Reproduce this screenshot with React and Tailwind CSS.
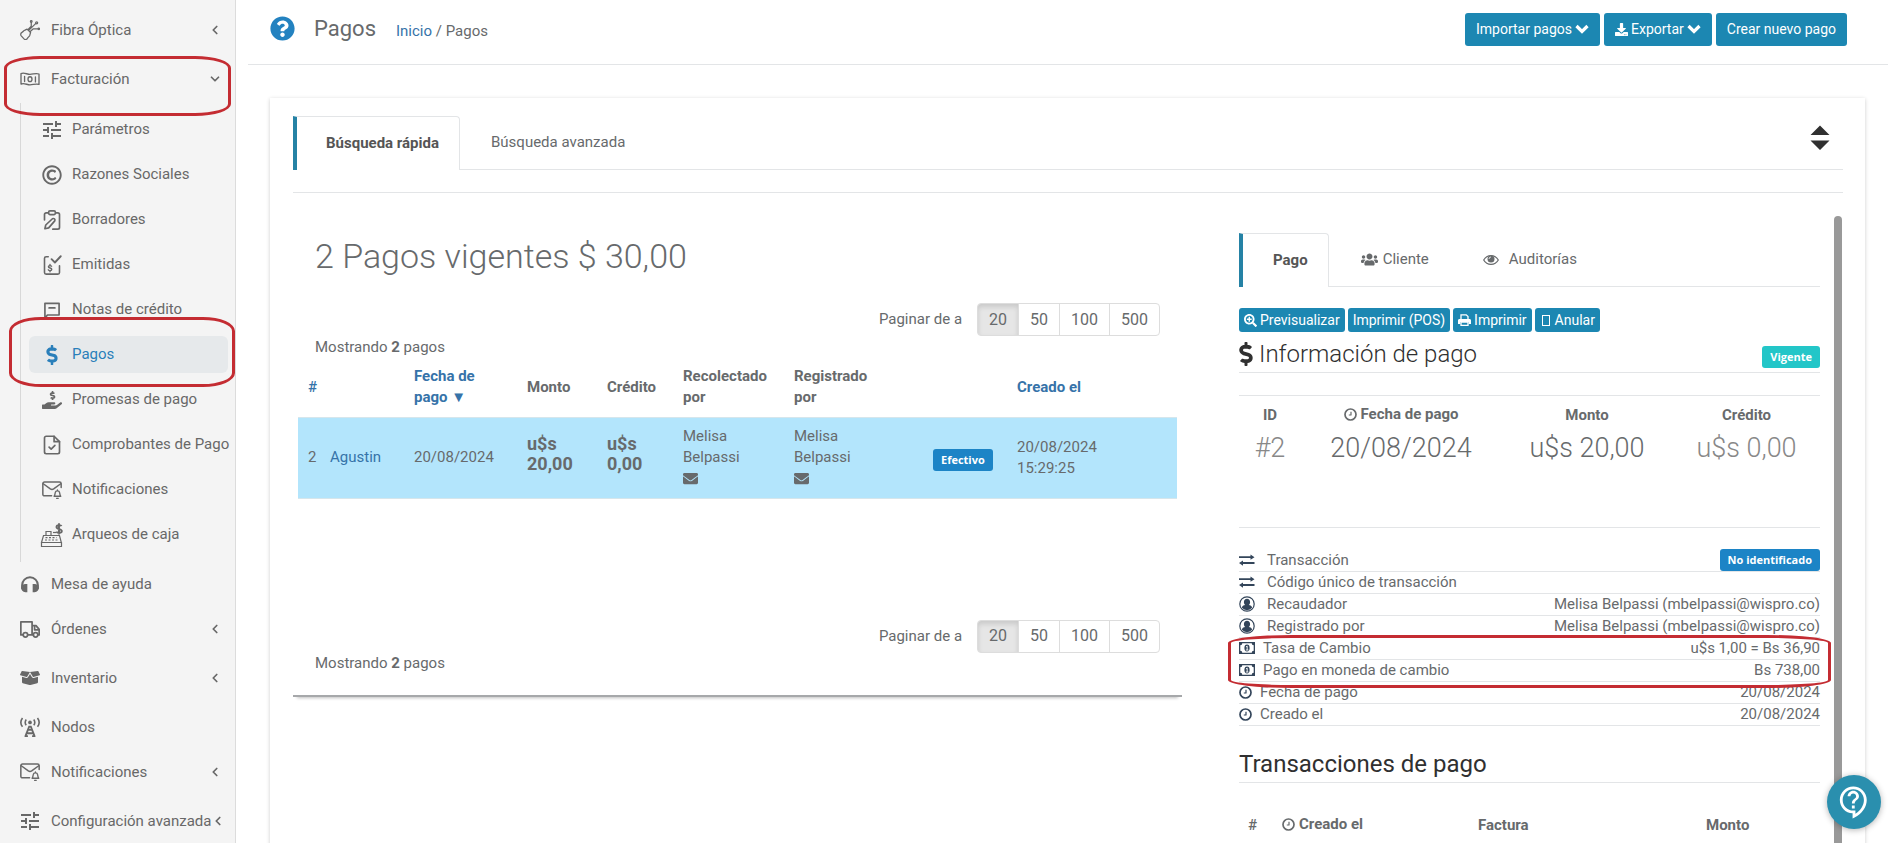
import { useState } from "react";
import {
  FaBoxOpen,
  FaDollarSign,
  FaDownload,
  FaEnvelope,
  FaHandHoldingUsd,
  FaQuestionCircle,
  FaRegCopyright,
  FaSearchPlus,
  FaUsers,
} from "react-icons/fa";
import { MdOutlineContactSupport, MdTune } from "react-icons/md";
import { ChevronDown, ChevronLeft } from "lucide-react";
import clsx from "clsx";

/* ---------- icons ---------- */

function Svg({ size = 20, box = 24, width = 2, className, children }) {
  return (
    <svg
      width={size}
      height={size}
      viewBox={`0 0 ${box} ${box}`}
      fill="none"
      stroke="currentColor"
      strokeWidth={width}
      strokeLinecap="round"
      strokeLinejoin="round"
      className={clsx("shrink-0", className)}
      aria-hidden="true"
    >
      {children}
    </svg>
  );
}

const FiberIcon = () => (
  <Svg width={1.5}>
    <path d="M8.500 11 6 12.200c-1.800.4-2 2-3.600 2.600-1.700.8-1.900 3-.9 4.200l3.300 3.700c1.200 1.200 3.300 1 4.200-.7.700-1.600 2.100-1.900 2.700-3.500l1-3.500Z" />
    <path d="M9.500 11.500 13.500 7.500V2.500M10.500 12.500l8.500-8.500M12 14l4-3.500h6.500" />
    <circle cx="13.500" cy="1.800" r="1" />
    <circle cx="20" cy="3.300" r="1.200" />
    <circle cx="22.600" cy="10.500" r="0.900" />
  </Svg>
);

const BillIcon = () => (
  <Svg width={1.6}>
    <path d="M1.200 5.500c3.600-1.600 7.200.9 10.800.9s7.200-1.800 10.800-.4v12.500c-3.600-1.400-7.200.5-10.800.5s-7.200-2.500-10.800-.9Z" />
    <ellipse cx="12" cy="12.200" rx="2.400" ry="2.900" />
    <path d="M5.500 9v6M18.500 9.500v6" />
  </Svg>
);

const DraftIcon = () => (
  <Svg width={2}>
    <path d="M7 3.500H5a2 2 0 0 0-2 2V12M17 3.500h2a2 2 0 0 1 2 2V21a2 2 0 0 1-2 2h-6" />
    <rect x="8" y="1" width="8" height="4.500" rx="1.500" />
    <path d="M3.500 22.500 4.500 18l8-7.500c1.800-1 3.800.8 2.800 2.600L8 21.500Z" />
  </Svg>
);

const IssuedIcon = () => (
  <Svg width={1.9}>
    <path d="M7.500 2H5a2 2 0 0 0-2 2v17a2 2 0 0 0 2 2h14a2 2 0 0 0 2-2v-8" />
    <path d="m11.500 5 4 4L22.500 1.500" strokeWidth="2.200" />
    <path d="M11.500 13.500c-.6-1-3.800-1.200-3.800.6 0 2 4 1.100 4 3.100 0 2-3.400 1.900-4.200.5M9.600 11.500v1.500M9.600 18.500V20" strokeWidth="1.700" />
  </Svg>
);

const NoteIcon = () => (
  <Svg width={2}>
    <path d="M3.500 22V4h17v14h-14Z" />
    <path d="M8.500 9.500h7" />
  </Svg>
);

const ReceiptIcon = () => (
  <Svg width={2}>
    <path d="M14.500 1.500H5a2 2 0 0 0-2 2v17a2 2 0 0 0 2 2h14a2 2 0 0 0 2-2V8Z" />
    <path d="M14.500 1.500V8H21" />
    <path d="m8.500 14.500 2.500 2.500 4.500-4.500" />
  </Svg>
);

const MailBellIcon = () => (
  <Svg width={1.8}>
    <path d="M11.500 19H3a2 2 0 0 1-2-2V4.500a2 2 0 0 1 2-2h18a2 2 0 0 1 2 2V9" />
    <path d="m1.500 4.500 8.500 6.200c1.200.8 2.800.8 4 0l8.500-6.200" />
    <path d="M14.500 19.500c1.300-1.200 1-3 1.400-4.500.5-2.500 4.700-2.500 5.200 0 .4 1.500.1 3.300 1.400 4.500ZM18.500 12v1M17.500 22h2" strokeWidth="1.600" />
  </Svg>
);

const RegisterIcon = () => (
  <svg width="24" height="24" viewBox="0 0 24 24" className="shrink-0" aria-hidden="true">
    <g fill="none" stroke="currentColor" strokeWidth="1.200">
      <path d="M3.500 12.500h16l1.800 7H1.500ZM1.500 19.500h20v4h-20ZM6 12.500V8.500h5v4" />
      <path d="M5.500 14.700h11M5 17h13" strokeDasharray="2 1.500" />
      <path d="M13 9.500h3" />
    </g>
    <path
      d="M21.500 3.200c-.6-1.400-5-1.600-5 .9 0 2.600 5.300 1.400 5.300 4 0 2.500-4.700 2.300-5.500.6M19 .3v11.200"
      fill="none"
      stroke="currentColor"
      strokeWidth="1.900"
    />
  </svg>
);

const HeadphonesIcon = () => (
  <Svg width={2.4}>
    <path d="M2.500 17v-3.500a9.500 9.500 0 0 1 19 0V17" />
    <path
      d="M8.800 12v9.800H6.500C3.200 21.800 1.500 19.500 1.500 16.900S3.500 12 6.500 12ZM15.200 12v9.800h2.300c3.300 0 5-2.300 5-4.900S20.500 12 17.500 12Z"
      fill="currentColor"
      stroke="none"
    />
  </Svg>
);

const TruckIcon = () => (
  <Svg width={2.1}>
    <path d="M3.800 19H1V3.500h13.500V19H9.300M14.500 8h4.700L23 12.500V19h-1.500M16 19h-1.500" />
    <path d="M17.500 9v4H23" />
    <circle cx="6.500" cy="19" r="2.700" />
    <circle cx="18.700" cy="19" r="2.700" />
  </Svg>
);

const TowerIcon = () => (
  <svg width="20" height="20" viewBox="0 0 24 24" className="shrink-0" aria-hidden="true">
    <circle cx="12" cy="6.500" r="2.200" fill="currentColor" />
    <g fill="none" stroke="currentColor" strokeWidth="1.900">
      <path d="M7.500 3a6 6 0 0 0 0 7M16.500 3a6 6 0 0 1 0 7M3 1.200c-2.500 3.300-2.500 7.300 0 10.600M21 1.200c2.500 3.300 2.500 7.300 0 10.600" />
      <path d="M6.500 23 11 11.500h2L17.500 23M5.500 23h4M14.500 23h4M9.500 15.500h5M8 19.500h8" strokeWidth="2.200" />
    </g>
  </svg>
);

const ClockIcon = ({ className }) => (
  <Svg size={13} box={13} width={1.7} className={clsx("inline-block", className)}>
    <circle cx="6.500" cy="6.500" r="5.500" />
    <path d="M7 3.800V7H4.800" strokeWidth="1.200" strokeLinecap="butt" />
  </Svg>
);

const ExchangeIcon = () => (
  <svg width="16" height="14" viewBox="0 0 16 14" fill="currentColor" aria-hidden="true">
    <path d="M0 3.200h11.500V1.500l4 2.700-4 2.500V5H0ZM15.500 9.100H4V7.400L0 10l4 2.700V11h11.500Z" />
  </svg>
);

const UserCircleIcon = () => (
  <svg width="16" height="16" viewBox="0 0 16 16" aria-hidden="true">
    <circle cx="8" cy="8" r="7.200" fill="none" stroke="currentColor" strokeWidth="1.200" />
    <path d="M8 2.800c1.900 0 3.100 1.300 3.100 3.200 0 1.300-.5 2.400-1.300 3 1.700.1 3 .8 3.300 2.800a6.500 6.500 0 0 1-10.200 0c.3-2 1.600-2.700 3.300-2.800-.8-.6-1.300-1.700-1.300-3 0-1.900 1.200-3.200 3.100-3.200Z" fill="currentColor" />
  </svg>
);

const MoneyIcon = () => (
  <svg width="16" height="12" viewBox="0 0 16 12" aria-hidden="true">
    <path
      d="M0 0h16v12H0ZM3.300 1.300A2 2 0 0 1 1.300 3.300v5.400a2 2 0 0 1 2 2h9.400a2 2 0 0 1 2-2V3.300a2 2 0 0 1-2-2Z"
      fill="currentColor"
      fillRule="evenodd"
    />
    <ellipse cx="8" cy="6" rx="2.600" ry="3.400" fill="currentColor" />
    <path d="M7 5l1.200-.9v3.800M6.900 8h2.500" fill="none" stroke="#fff" strokeWidth="0.900" />
  </svg>
);

const EyeIcon = () => (
  <svg width="16" height="12" viewBox="0 0 16 12" className="shrink-0" aria-hidden="true">
    <path d="M.7 6C4 .1 12 .1 15.300 6 12 11.900 4 11.900.7 6Z" fill="none" stroke="currentColor" strokeWidth="1.200" />
    <circle cx="8" cy="5" r="3.500" fill="currentColor" />
    <path d="M6 5a2 2 0 0 1 2-2" fill="none" stroke="#fff" strokeWidth="0.800" />
  </svg>
);

const PrintIcon = () => (
  <svg width="13" height="12" viewBox="0 0 13 12" className="shrink-0" aria-hidden="true">
    <path d="M3 5.500V.8h5.200l1.800 1.800v2.900" fill="none" stroke="currentColor" strokeWidth="1.300" />
    <path d="M1.500 5h10c.8 0 1.500.6 1.500 1.400V10h-2.300V8H2.300v2H0V6.400C0 5.600.7 5 1.500 5Z" fill="currentColor" />
    <path d="M3 8h7v3.300H3Z" fill="none" stroke="currentColor" strokeWidth="1.300" />
  </svg>
);

const CaretIcon = () => (
  <svg width="14" height="10" viewBox="0 0 14 10" className="shrink-0" aria-hidden="true">
    <path d="m1.500 2 5.500 5.500L12.500 2" fill="none" stroke="currentColor" strokeWidth="3.200" />
  </svg>
);

const SortIcon = () => (
  <svg width="20" height="26" viewBox="0 0 20 26" fill="currentColor" aria-hidden="true">
    <path d="M10 .5 19.500 10H.5ZM.5 15.500h19L10 25Z" />
  </svg>
);

/* ---------- data ---------- */

const billingItems = [
  { label: "Parámetros", icon: <MdTune size={24} className="shrink-0" /> },
  { label: "Razones Sociales", icon: <FaRegCopyright size={20} /> },
  { label: "Borradores", icon: <DraftIcon /> },
  { label: "Emitidas", icon: <IssuedIcon /> },
  { label: "Notas de crédito", icon: <NoteIcon /> },
  { label: "Pagos", icon: <FaDollarSign size={20} />, active: true },
  { label: "Promesas de pago", icon: <FaHandHoldingUsd size={20} /> },
  { label: "Comprobantes de Pago", icon: <ReceiptIcon /> },
  { label: "Notificaciones", icon: <MailBellIcon /> },
  { label: "Arqueos de caja", icon: <RegisterIcon /> },
];

const bottomItems = [
  { label: "Mesa de ayuda", icon: <HeadphonesIcon /> },
  { label: "Órdenes", icon: <TruckIcon />, parent: true },
  { label: "Inventario", icon: <FaBoxOpen size={20} />, parent: true },
  { label: "Nodos", icon: <TowerIcon /> },
  { label: "Notificaciones", icon: <MailBellIcon />, parent: true },
  { label: "Configuración avanzada", icon: <MdTune size={24} className="shrink-0" />, parent: true },
];

const details = [
  { label: "Transacción", icon: <ExchangeIcon />, gap: "gap-3", badge: "No identificado" },
  { label: "Código único de transacción", icon: <ExchangeIcon />, gap: "gap-3" },
  { label: "Recaudador", icon: <UserCircleIcon />, gap: "gap-3", value: "Melisa Belpassi (mbelpassi@wispro.co)" },
  { label: "Registrado por", icon: <UserCircleIcon />, gap: "gap-3", value: "Melisa Belpassi (mbelpassi@wispro.co)" },
];

const exchange = [
  { label: "Tasa de Cambio", icon: <MoneyIcon />, gap: "gap-2", value: "u$s 1,00 = Bs 36,90" },
  { label: "Pago en moneda de cambio", icon: <MoneyIcon />, gap: "gap-2", value: "Bs 738,00" },
];

const dates = [
  { label: "Fecha de pago", icon: <ClockIcon />, gap: "gap-2", value: "20/08/2024" },
  { label: "Creado el", icon: <ClockIcon />, gap: "gap-2", value: "20/08/2024" },
];

/* ---------- pieces ---------- */

function MenuItem({ label, icon, parent, open }) {
  return (
    <a href="#" className={clsx("flex items-start pr-[13px] pl-5", parent ? "h-[49px]" : "h-[45px]")}>
      <span className="flex h-11 w-full items-center">
        <span className="flex w-5 shrink-0 justify-center">{icon}</span>
        <span className="ml-[11px] whitespace-nowrap">{label}</span>
        {parent &&
          (open ? (
            <ChevronDown size={14} strokeWidth={3} className="ml-auto shrink-0" />
          ) : (
            <ChevronLeft size={14} strokeWidth={3} className="ml-auto shrink-0" />
          ))}
      </span>
    </a>
  );
}

function Sidebar() {
  return (
    <nav className="w-[236px] shrink-0 border-r border-[#dcdcdc] bg-[#f4f4f4] pt-2 text-[#686868]">
      <MenuItem label="Fibra Óptica" icon={<FiberIcon />} parent />
      <div className="relative">
        <MenuItem label="Facturación" icon={<BillIcon />} parent open />
        <div className="pointer-events-none absolute -top-px right-1 left-1 z-10 h-[60px] rounded-[36px/12px] border-3 border-[#c42c32]" />
      </div>
      <ul className="-mt-[3px] ml-5 border-l border-[#d8d8d8] pt-1 pb-[5px]">
        {billingItems.map(({ label, icon, active }) => (
          <li key={label} className="relative flex h-[45px] items-center pr-[7px] pl-2">
            <a
              href="#"
              className={clsx(
                "flex h-[37px] w-full items-center rounded-md pl-3",
                active && "bg-[#e6e9eb] text-[#2a7fba]"
              )}
            >
              <span className="flex w-[22px] shrink-0 justify-center">{icon}</span>
              <span className="ml-[9px] whitespace-nowrap">{label}</span>
            </a>
            {active && (
              <div className="pointer-events-none absolute -top-[15px] right-0 -left-3 z-10 h-[70px] rounded-[32px/14px] border-3 border-[#c42c32]" />
            )}
          </li>
        ))}
      </ul>
      {bottomItems.map((item) => (
        <MenuItem key={item.label} {...item} />
      ))}
    </nav>
  );
}

function Tab({ active, onClick, className, children }) {
  return (
    <button
      type="button"
      role="tab"
      aria-selected={active}
      onClick={onClick}
      className={clsx(
        "flex h-[54px] items-center",
        className,
        active
          ? "rounded-tr border-t border-r border-l-4 border-[#e3e5e7] border-l-[#2582a5] bg-white font-bold text-[#555]"
          : "border-b border-[#e3e5e7]"
      )}
    >
      {children}
    </button>
  );
}

function PageSize({ name }) {
  const [size, setSize] = useState(20);
  return (
    <div className="flex items-center justify-end pr-[22px]">
      <span className="mr-4" id={name}>
        Paginar de a
      </span>
      <div role="group" aria-labelledby={name} className="flex text-base">
        {[20, 50, 100, 500].map((n) => (
          <button
            key={n}
            type="button"
            onClick={() => setSize(n)}
            className={clsx(
              "-ml-px h-[33px] border border-[#ddd] px-[11px] first:rounded-l last:rounded-r",
              n === size && "bg-[#e6e6e6] inset-shadow-[0_3px_5px_rgba(0,0,0,0.125)]"
            )}
          >
            {n}
          </button>
        ))}
      </div>
    </div>
  );
}

function Badge({ color = "bg-[#1c84c6]", children }) {
  return (
    <span
      className={clsx(
        "inline-block rounded-[3px] px-2 py-[3px] font-['Open_Sans',sans-serif] text-[11px] leading-4 font-bold text-white",
        color
      )}
    >
      {children}
    </span>
  );
}

function SmallButton({ children }) {
  return (
    <button type="button" className="flex h-6 items-center gap-[3px] rounded-[3px] bg-[#1c87b2] px-[5px] text-sm text-white">
      {children}
    </button>
  );
}

function HeaderButton({ children }) {
  return (
    <button type="button" className="flex h-[33px] items-center gap-[3px] rounded-[3px] bg-[#1c87b2] px-[11px] text-sm text-white">
      {children}
    </button>
  );
}

function DetailRow({ label, icon, gap, value, badge }) {
  return (
    <div className="flex h-[22px] items-center justify-between border-b border-[#e3e5e7]">
      <dt className={clsx("flex items-center", gap)}>
        <span className="text-[#33455a]">{icon}</span>
        {label}
      </dt>
      <dd>{badge ? <Badge>{badge}</Badge> : value}</dd>
    </div>
  );
}

function Person() {
  return (
    <>
      Melisa
      <br />
      Belpassi
      <FaEnvelope size={15} className="my-[3px]" />
    </>
  );
}

function PaymentsTable() {
  return (
    <table className="w-full table-fixed text-left">
      <colgroup>
        <col className="w-[22px]" />
        <col className="w-[84px]" />
        <col className="w-[113px]" />
        <col className="w-[80px]" />
        <col className="w-[76px]" />
        <col className="w-[111px]" />
        <col className="w-[139px]" />
        <col className="w-[84px]" />
        <col />
      </colgroup>
      <thead>
        <tr className="h-[59px]">
          <th className="pl-[10px] font-medium text-[#3673a9]"><a href="#">#</a></th>
          <th></th>
          <th className="px-[10px] text-[#3673a9]">
            <a href="#">
              Fecha de
              <br />
              pago ▼
            </a>
          </th>
          <th className="px-[10px]">Monto</th>
          <th className="px-[10px]">Crédito</th>
          <th className="px-[10px]">Recolectado por</th>
          <th className="px-[10px]">
            Registrado
            <br />
            por
          </th>
          <th></th>
          <th className="px-[10px] text-[#3673a9]"><a href="#">Creado el</a></th>
        </tr>
      </thead>
      <tbody>
        <tr className="h-[81px] border-y border-[#d6e6ec] bg-[#b3e5fc]">
          <td className="pl-[10px]">2</td>
          <td className="pl-[10px] text-[#3673a9]"><a href="#">Agustin</a></td>
          <td className="px-[10px]">20/08/2024</td>
          <td className="px-[10px] pb-2 text-lg leading-5 font-bold">u$s 20,00</td>
          <td className="px-[10px] pb-2 text-lg leading-5 font-bold">
            u$s
            <br />
            0,00
          </td>
          <td className="px-[10px]"><Person /></td>
          <td className="px-[10px]"><Person /></td>
          <td className="px-[10px] pt-1"><Badge>Efectivo</Badge></td>
          <td className="px-[10px]">
            20/08/2024
            <br />
            15:29:25
          </td>
        </tr>
      </tbody>
    </table>
  );
}

function PaymentList() {
  return (
    <section className="min-w-0 flex-[889] self-start border-b-2 border-[#a6a8aa] pb-[21px] shadow-[0_5px_3px_-4px_rgba(0,0,0,0.25)]">
      <h2 className="pt-[43px] pl-[22px] text-[34px] leading-10 font-light">2 Pagos vigentes $ 30,00</h2>
      <div className="mt-[27px]">
        <PageSize name="paginar-arriba" />
      </div>
      <p className="mt-px pl-[22px]">
        Mostrando <b>2</b> pagos
      </p>
      <div className="px-[5px]">
        <PaymentsTable />
      </div>
      <div className="mt-[121px]">
        <PageSize name="paginar-abajo" />
      </div>
      <p className="pl-[22px]">
        Mostrando <b>2</b> pagos
      </p>
    </section>
  );
}

function PaymentDetail() {
  const [tab, setTab] = useState("pago");
  return (
    <section className="min-w-0 flex-[581] pt-10">
      <div role="tablist" className="flex">
        <Tab active={tab === "pago"} onClick={() => setTab("pago")} className="pr-5 pl-[30px]">
          Pago
        </Tab>
        <Tab active={tab === "cliente"} onClick={() => setTab("cliente")} className="gap-[5px] pr-[26px] pl-8">
          <FaUsers size={17} /> Cliente
        </Tab>
        <Tab active={tab === "auditorias"} onClick={() => setTab("auditorias")} className="gap-[10px] px-[28px]">
          <EyeIcon /> Auditorías
        </Tab>
        <div className="flex-1 border-b border-[#e3e5e7]" />
      </div>

      <div className="mt-[21px] flex gap-[3px]">
        <SmallButton>
          <FaSearchPlus size={13} /> Previsualizar
        </SmallButton>
        <SmallButton>Imprimir (POS)</SmallButton>
        <SmallButton>
          <PrintIcon /> Imprimir
        </SmallButton>
        <SmallButton>
          <span className="mx-[2px] h-[11px] w-2 border border-white" /> Anular
        </SmallButton>
      </div>

      <div className="flex h-[41px] items-center justify-between border-b border-[#e3e5e7] pt-1">
        <h3 className="flex items-center gap-[6px] text-2xl text-[#303030]">
          <FaDollarSign size={24} className="-mx-[5px]" />
          <span className="font-light">Información de pago</span>
        </h3>
        <span className="pt-[6px]">
          <Badge color="bg-[#23c6c8]">Vigente</Badge>
        </span>
      </div>

      <table className="mt-[22px] w-full table-fixed border-t border-[#e3e5e7] text-center">
        <colgroup>
          <col className="w-[62px]" />
          <col className="w-[200px]" />
          <col className="w-[172px]" />
          <col />
        </colgroup>
        <thead>
          <tr className="h-10">
            <th>ID</th>
            <th>
              <span className="inline-flex items-center gap-1">
                <ClockIcon /> Fecha de pago
              </span>
            </th>
            <th>Monto</th>
            <th>Crédito</th>
          </tr>
        </thead>
        <tbody>
          <tr className="text-[27px] leading-6 font-light">
            <td className="text-[#888]">#2</td>
            <td>20/08/2024</td>
            <td>u$s 20,00</td>
            <td className="text-[#888]">u$s 0,00</td>
          </tr>
        </tbody>
      </table>

      <dl className="mt-[67px] border-t border-[#e3e5e7] pt-[22px]">
        {details.map((row) => (
          <DetailRow key={row.label} {...row} />
        ))}
        <div className="relative">
          {exchange.map((row) => (
            <DetailRow key={row.label} {...row} />
          ))}
          <div className="pointer-events-none absolute -inset-x-[11px] -top-[3px] z-10 h-[53px] rounded-[64px/8px] border-3 border-[#c42c32]" />
        </div>
        {dates.map((row) => (
          <DetailRow key={row.label} {...row} />
        ))}
      </dl>

      <h3 className="mt-[22px] border-b border-[#e3e5e7] pb-[2px] text-2xl leading-8 text-[#303030]">
        Transacciones de pago
      </h3>
      <table className="mt-[23px] w-full table-fixed text-left">
        <colgroup>
          <col className="w-[33px]" />
          <col className="w-[196px]" />
          <col className="w-[228px]" />
          <col />
        </colgroup>
        <thead>
          <tr className="h-10">
            <th className="pl-[9px] font-medium">#</th>
            <th className="pl-[10px]">
              <span className="inline-flex items-center gap-1">
                <ClockIcon /> Creado el
              </span>
            </th>
            <th className="pl-[10px]">Factura</th>
            <th className="pl-[10px]">Monto</th>
          </tr>
        </thead>
      </table>
    </section>
  );
}

export default function App() {
  const [search, setSearch] = useState("rapida");

  return (
    <div className="flex h-screen overflow-hidden bg-white font-[Roboto,sans-serif] text-[15px] leading-[21px] text-[#676a6c]">
      <Sidebar />
      <main className="flex min-w-0 flex-1 flex-col pr-[9px] pl-3">
        <header className="flex h-[65px] shrink-0 items-center border-b border-[#e3e5e7] pr-[41px] pb-2 pl-[22px]">
          <FaQuestionCircle size={25} className="text-[#2382c0]" />
          <h1 className="ml-[19px] text-[22px]">Pagos</h1>
          <div className="ml-5 pt-[6px]">
            <a href="#" className="text-[#3673a9]">Inicio</a> / Pagos
          </div>
          <div className="ml-auto flex gap-1 pt-[2px]">
            <HeaderButton>
              Importar pagos <CaretIcon />
            </HeaderButton>
            <HeaderButton>
              <FaDownload size={13} /> Exportar <CaretIcon />
            </HeaderButton>
            <HeaderButton>Crear nuevo pago</HeaderButton>
          </div>
        </header>

        <div className="mt-[33px] mr-[23px] ml-[22px] flex flex-1 flex-col pt-[18px] pr-[22px] pl-[23px] shadow-[0_1px_4px_rgba(0,0,0,0.2)]">
          <div role="tablist" className="flex">
            <Tab active={search === "rapida"} onClick={() => setSearch("rapida")} className="pr-5 pl-[29px]">
              Búsqueda rápida
            </Tab>
            <Tab active={search === "avanzada"} onClick={() => setSearch("avanzada")} className="px-[31px]">
              Búsqueda avanzada
            </Tab>
            <div className="flex flex-1 items-center justify-end border-b border-[#e3e5e7] pr-[13px] pb-[10px]">
              <button type="button" aria-label="Ordenar" className="text-[#303030]">
                <SortIcon />
              </button>
            </div>
          </div>

          <div className="mt-[22px] flex flex-1 border-t border-[#e3e5e7]">
            <PaymentList />
            <div className="w-[57px] shrink-0" />
            <PaymentDetail />
            <div className="mt-[23px] mr-px ml-[14px] w-2 shrink-0 rounded-full bg-[#999]" />
          </div>
        </div>
      </main>

      <button
        type="button"
        aria-label="Ayuda"
        className="fixed right-4 bottom-[14px] z-20 flex size-[54px] items-center justify-center rounded-full bg-[#2a8fae] text-white shadow-[0_1px_6px_rgba(0,0,0,0.3)]"
      >
        <MdOutlineContactSupport size={34} />
      </button>
    </div>
  );
}
